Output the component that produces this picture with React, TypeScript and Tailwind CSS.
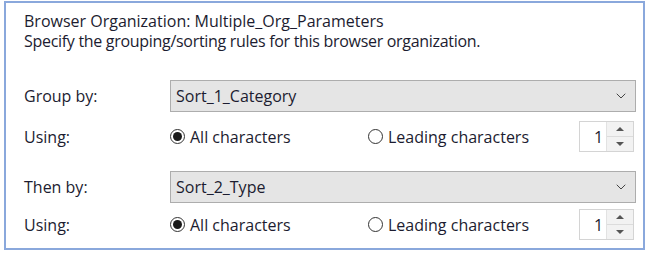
import { ChevronDown } from "lucide-react";

function Radio({ checked, label }: { checked?: boolean; label: string }) {
  return (
    <div className="flex items-center">
      <span className="flex size-[15px] items-center justify-center rounded-full border border-[#333] bg-white">
        {checked && <span className="size-[9px] rounded-full bg-[#1a1a1a]" />}
      </span>
      <span className="ml-[5px]">{label}</span>
    </div>
  );
}

function Spinner() {
  return (
    <div className="mr-[2px] flex h-[31px] w-[55px] shrink-0 border border-[#d4d4d4] bg-white">
      <div className="flex flex-1 items-center pl-[14px]">1</div>
      <div className="flex w-[27px] flex-col border-l border-[#e2e2e2] bg-[#f2f2f2]">
        <div className="flex flex-1 items-center justify-center border-b border-[#dcdcdc]">
          <span className="h-0 w-0 border-x-[4px] border-b-[4px] border-x-transparent border-b-[#555]" />
        </div>
        <div className="flex flex-1 items-center justify-center">
          <span className="h-0 w-0 border-x-[4px] border-t-[4px] border-x-transparent border-t-[#555]" />
        </div>
      </div>
    </div>
  );
}

function Group({ label, value, first }: { label: string; value: string; first?: boolean }) {
  return (
    <div className={first ? "mt-[29px]" : "mt-[19px]"}>
      <div className="flex items-center">
        <div className="w-[146px]">{label}</div>
        <div className="flex h-[32px] w-[466px] items-center justify-between border border-[#adadad] bg-[#e5e5e5] pl-[5px] pr-[6px]">
          <span>{value}</span>
          <ChevronDown className="size-[16px] text-[#444]" strokeWidth={1.5} />
        </div>
      </div>
      <div className={`flex items-center ${first ? "mt-[9px]" : "mt-[6px]"}`}>
        <div className="w-[146px]">Using:</div>
        <div className="w-[198px]">
          <Radio checked label="All characters" />
        </div>
        <Radio label="Leading characters" />
        <div className="flex-1" />
        <Spinner />
      </div>
    </div>
  );
}

export default function App() {
  return (
    <div
      className="h-[259px] w-[652px] bg-white pt-[1px] text-[16px] leading-[20px] text-[#1c1c30]"
      style={{ fontFamily: '"Open Sans", "Noto Sans", sans-serif' }}
    >
      <div className="ml-[4px] h-[249px] w-[641px] border-2 border-[#8aa8dc] pl-[18px] pr-[7px] pt-[8px]">
        <div>Browser Organization: Multiple_Org_Parameters</div>
        <div className="tracking-[-0.3px]">Specify the grouping/sorting rules for this browser organization.</div>
        <Group first label="Group by:" value="Sort_1_Category" />
        <Group label="Then by:" value="Sort_2_Type" />
      </div>
    </div>
  );
}
